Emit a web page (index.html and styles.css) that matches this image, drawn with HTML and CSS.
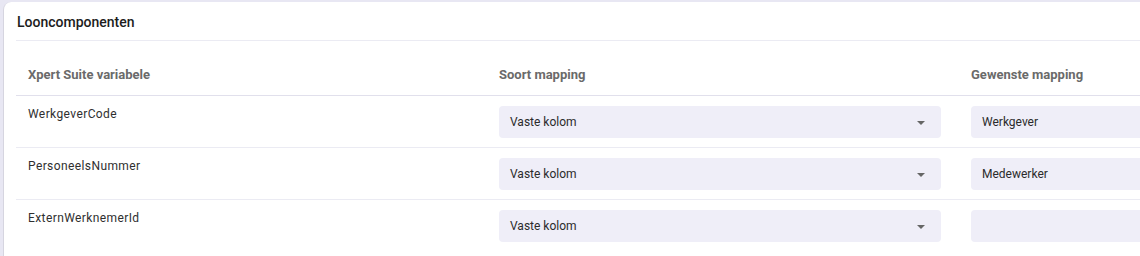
FILE: index.html
```html
<!DOCTYPE html>
<html lang="nl">
<head>
    <meta charset="UTF-8">
    <title>Looncomponenten</title>
    <link rel="stylesheet" href="styles.css">
</head>
<body>
    <section class="card">
        <h2 class="card-title">Looncomponenten</h2>
        <div class="mapping-table">
            <div class="row head">
                <div class="cell">Xpert Suite variabele</div>
                <div class="cell">Soort mapping</div>
                <div class="cell">Gewenste mapping</div>
            </div>
            <div class="row">
                <div class="cell name">WerkgeverCode</div>
                <div class="cell"><div class="select">Vaste kolom<span class="caret"></span></div></div>
                <div class="cell"><div class="field">Werkgever</div></div>
            </div>
            <div class="row">
                <div class="cell name">PersoneelsNummer</div>
                <div class="cell"><div class="select">Vaste kolom<span class="caret"></span></div></div>
                <div class="cell"><div class="field">Medewerker</div></div>
            </div>
            <div class="row">
                <div class="cell name">ExternWerknemerId</div>
                <div class="cell"><div class="select">Vaste kolom<span class="caret"></span></div></div>
                <div class="cell"><div class="field"></div></div>
            </div>
        </div>
    </section>
</body>
</html>
```

FILE: styles.css
```css
* {
    box-sizing: border-box;
}
html, body {
    margin: 0;
}
body {
    background: #e8e7f3;
    font-family: Roboto, "Noto Sans", sans-serif;
    color: #2b2b2b;
    padding: 2px 0 0 3px;
    overflow: hidden;
    height: 256px;
}
.card {
    background: #fff;
    border-left: 1px solid #d6d5e0;
    border-radius: 8px 0 0 0;
    width: 1500px;
    min-height: 260px;
    padding: 0 0 0 12px;
}
.card-title {
    margin: 0;
    font-size: 14px;
    font-weight: 500;
    color: #1c1c1c;
    height: 39px;
    line-height: 41px;
    padding-left: 1px;
    border-bottom: 1px solid #ebebf3;
}
.row {
    display: grid;
    grid-template-columns: 471px 472px 472px;
    border-bottom: 1px solid #ebebf3;
}
.row:last-child {
    border-bottom: 0;
}
.row.head {
    height: 55px;
    border-bottom-color: #e1e0ec;
    font-weight: 700;
    color: #6a6a6a;
    align-items: end;
}
.row.head .cell {
    font-size: 13px;
    padding-bottom: 13px;
}
.row:not(.head) {
    height: 52px;
}
.cell {
    padding: 0 12px;
    font-size: 12px;
}
.cell.name {
    font-size: 12px;
    letter-spacing: .4px;
    padding-top: 11px;
    color: #2f2f2f;
}
.select, .field {
    margin-top: 10px;
    height: 32px;
    background: #efeef8;
    border-radius: 4px;
    padding: 0 11px;
    display: flex;
    align-items: center;
    color: #2b2b2b;
    font-size: 12px;
}
.select {
    width: 442px;
    position: relative;
}
.caret {
    position: absolute;
    right: 16px;
    top: 15px;
    border-left: 4px solid transparent;
    border-right: 4px solid transparent;
    border-top: 4px solid #666;
}
```
